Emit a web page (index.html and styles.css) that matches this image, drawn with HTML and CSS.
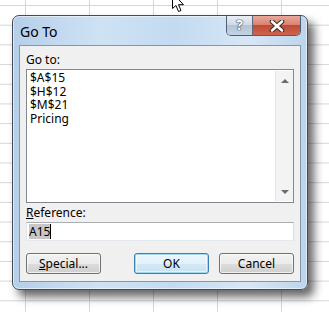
FILE: index.html
```html
<!DOCTYPE html>
<html lang="en">
<head>
  <meta charset="UTF-8" />
  <title>Go To</title>
  <link rel="stylesheet" href="styles.css">
</head>
<body>

  <div class="dialog">
    <div class="titlebar">
      <span class="title">Go To</span>
      <div class="caption-buttons">
        <span class="cap-help">?</span>
        <span class="cap-close">
          <svg width="16" height="12" viewBox="0 0 16 12">
            <path d="M3 1.5 L13 10.5 M13 1.5 L3 10.5" stroke="#3b2a26" stroke-width="4.6" stroke-linecap="round"/>
            <path d="M3 1.5 L13 10.5 M13 1.5 L3 10.5" stroke="#ffffff" stroke-width="2.6" stroke-linecap="round"/>
          </svg>
        </span>
      </div>
    </div>

    <div class="panel">
      <div class="label">Go to:</div>
      <div class="listbox">
        <div class="items">
          <div>$A$15</div>
          <div>$H$12</div>
          <div>$M$21</div>
          <div>Pricing</div>
        </div>
        <div class="scrollbar">
          <span class="arrow up"></span>
          <span class="arrow down"></span>
        </div>
      </div>

      <div class="label ref-label"><u>R</u>eference:</div>
      <div class="textbox"><span class="selected">A15</span><span class="caret"></span></div>

      <div class="buttons">
        <button class="btn"><u>S</u>pecial...</button>
        <button class="btn default">OK</button>
        <button class="btn">Cancel</button>
      </div>
    </div>
  </div>

  <svg class="cursor" width="16" height="14" viewBox="0 0 16 14">
    <path d="M1.5 -7 L1.5 8.5 L5 5.5 L7.5 11.5 L10 10.5 L7.5 4.7 L12.5 4.7 Z" fill="#fff" stroke="#000" stroke-width="1" stroke-linejoin="round"/>
  </svg>

</body>
</html>
```

FILE: styles.css
```css
body {
  margin: 0;
  padding: 15px 0 0 12px;
  height: 312px;
  box-sizing: border-box;
  overflow: hidden;
  position: relative;
  background-color: #ffffff;
  background-image:
    linear-gradient(to right, #d6d6d6 1px, transparent 1px),
    linear-gradient(to bottom, #d6d6d6 1px, transparent 1px);
  background-size: 64px 19.7px;
  background-position: 25px 5px;
  font-family: 'Noto Sans', sans-serif;
  font-size: 12px;
  color: #000;
}

.dialog {
  width: 296px;
  height: 275px;
  box-sizing: border-box;
  border: 1px solid #434c56;
  border-radius: 7px;
  padding: 0 6px 7px 6px;
  display: flex;
  flex-direction: column;
  background: linear-gradient(to right, #b5cfe9 0%, #cfe2f4 30%, #c3daf1 55%, #d7e7f6 80%, #bcd4ec 100%);
  box-shadow: inset 0 0 0 1px rgba(255, 255, 255, 0.55), 6px 7px 10px rgba(0, 0, 0, 0.6);
}

.titlebar {
  height: 29px;
  display: flex;
  align-items: flex-start;
}

.title {
  margin: 8px 0 0 1px;
  font-size: 14px;
  line-height: 16px;
  color: #000;
}

.caption-buttons {
  margin-left: auto;
  display: flex;
  height: 19px;
  border: 1px solid #4f5f70;
  border-top: none;
  border-radius: 0 0 5px 5px;
  overflow: hidden;
}

.cap-help {
  width: 25px;
  text-align: center;
  font-size: 14px;
  font-weight: bold;
  line-height: 18px;
  color: #fff;
  text-shadow: 0 0 1px #2c3a48, 0 0 1px #2c3a48, 0 0 1px #2c3a48;
  background: linear-gradient(to bottom, #e7eef6 0%, #cfdbe7 45%, #b3c4d6 50%, #c4d3e2 100%);
  border-right: 1px solid #5a6a7b;
}

.cap-close {
  width: 47px;
  display: flex;
  align-items: center;
  justify-content: center;
  background: linear-gradient(to bottom, #e9a99b 0%, #d88372 45%, #c14a33 50%, #cd6450 100%);
}

.panel {
  flex: 1;
  border: 1px solid #8596a9;
  background: #f0f0f0;
  padding: 0 6px 7px 6px;
  display: flex;
  flex-direction: column;
}

.label {
  margin-top: 7px;
  height: 14px;
  line-height: 14px;
}

.listbox {
  margin-top: 2px;
  height: 134px;
  box-sizing: border-box;
  border: 1px solid #828790;
  background: #fff;
  display: flex;
}

.items {
  flex: 1;
  padding: 1px 0 0 3px;
  line-height: 13.5px;
}

.scrollbar {
  width: 17px;
  margin: 1px 0 1px 0;
  background: #f3f3f3;
  border-left: 1px solid #e6e6e6;
  display: flex;
  flex-direction: column;
  justify-content: space-between;
  align-items: center;
  padding: 8px 0 7px 0;
}

.arrow {
  width: 0;
  height: 0;
  border-left: 4px solid transparent;
  border-right: 4px solid transparent;
}

.arrow.up {
  border-bottom: 4px solid #6c6c6c;
}

.arrow.down {
  border-top: 4px solid #6c6c6c;
}

.ref-label {
  margin-top: 3px;
}

.textbox {
  margin-top: 2px;
  height: 19px;
  box-sizing: border-box;
  border: 1px solid #abadb3;
  border-color: #abadb3 #dbdfe6 #e3e9ef #e2e3ea;
  background: #fff;
  display: flex;
  align-items: center;
  padding-left: 2px;
}

.selected {
  background: #c7c7c7;
  line-height: 15px;
}

.caret {
  width: 1px;
  height: 15px;
  background: #000;
}

.buttons {
  margin-top: 12px;
  display: flex;
  justify-content: space-between;
}

.btn {
  width: 75px;
  height: 21px;
  padding: 0;
  font-family: 'Noto Sans', sans-serif;
  font-size: 12px;
  color: #000;
  border: 1px solid #707070;
  border-radius: 3px;
  background: linear-gradient(to bottom, #f2f2f2 0%, #ebebeb 50%, #dddddd 50%, #cfcfcf 100%);
  box-shadow: inset 0 0 0 1px rgba(255, 255, 255, 0.7);
}

.btn.default {
  margin-left: auto;
  margin-right: 10px;
  border-color: #3c7fb1;
  box-shadow: inset 0 0 0 1px #9fd8f3, inset 0 0 0 2px rgba(255, 255, 255, 0.5);
  background: linear-gradient(to bottom, #eaf6fd 0%, #e4f1fa 50%, #d4e9f6 50%, #c9e1f2 100%);
}

.cursor {
  position: absolute;
  left: 171px;
  top: 0;
}
```
